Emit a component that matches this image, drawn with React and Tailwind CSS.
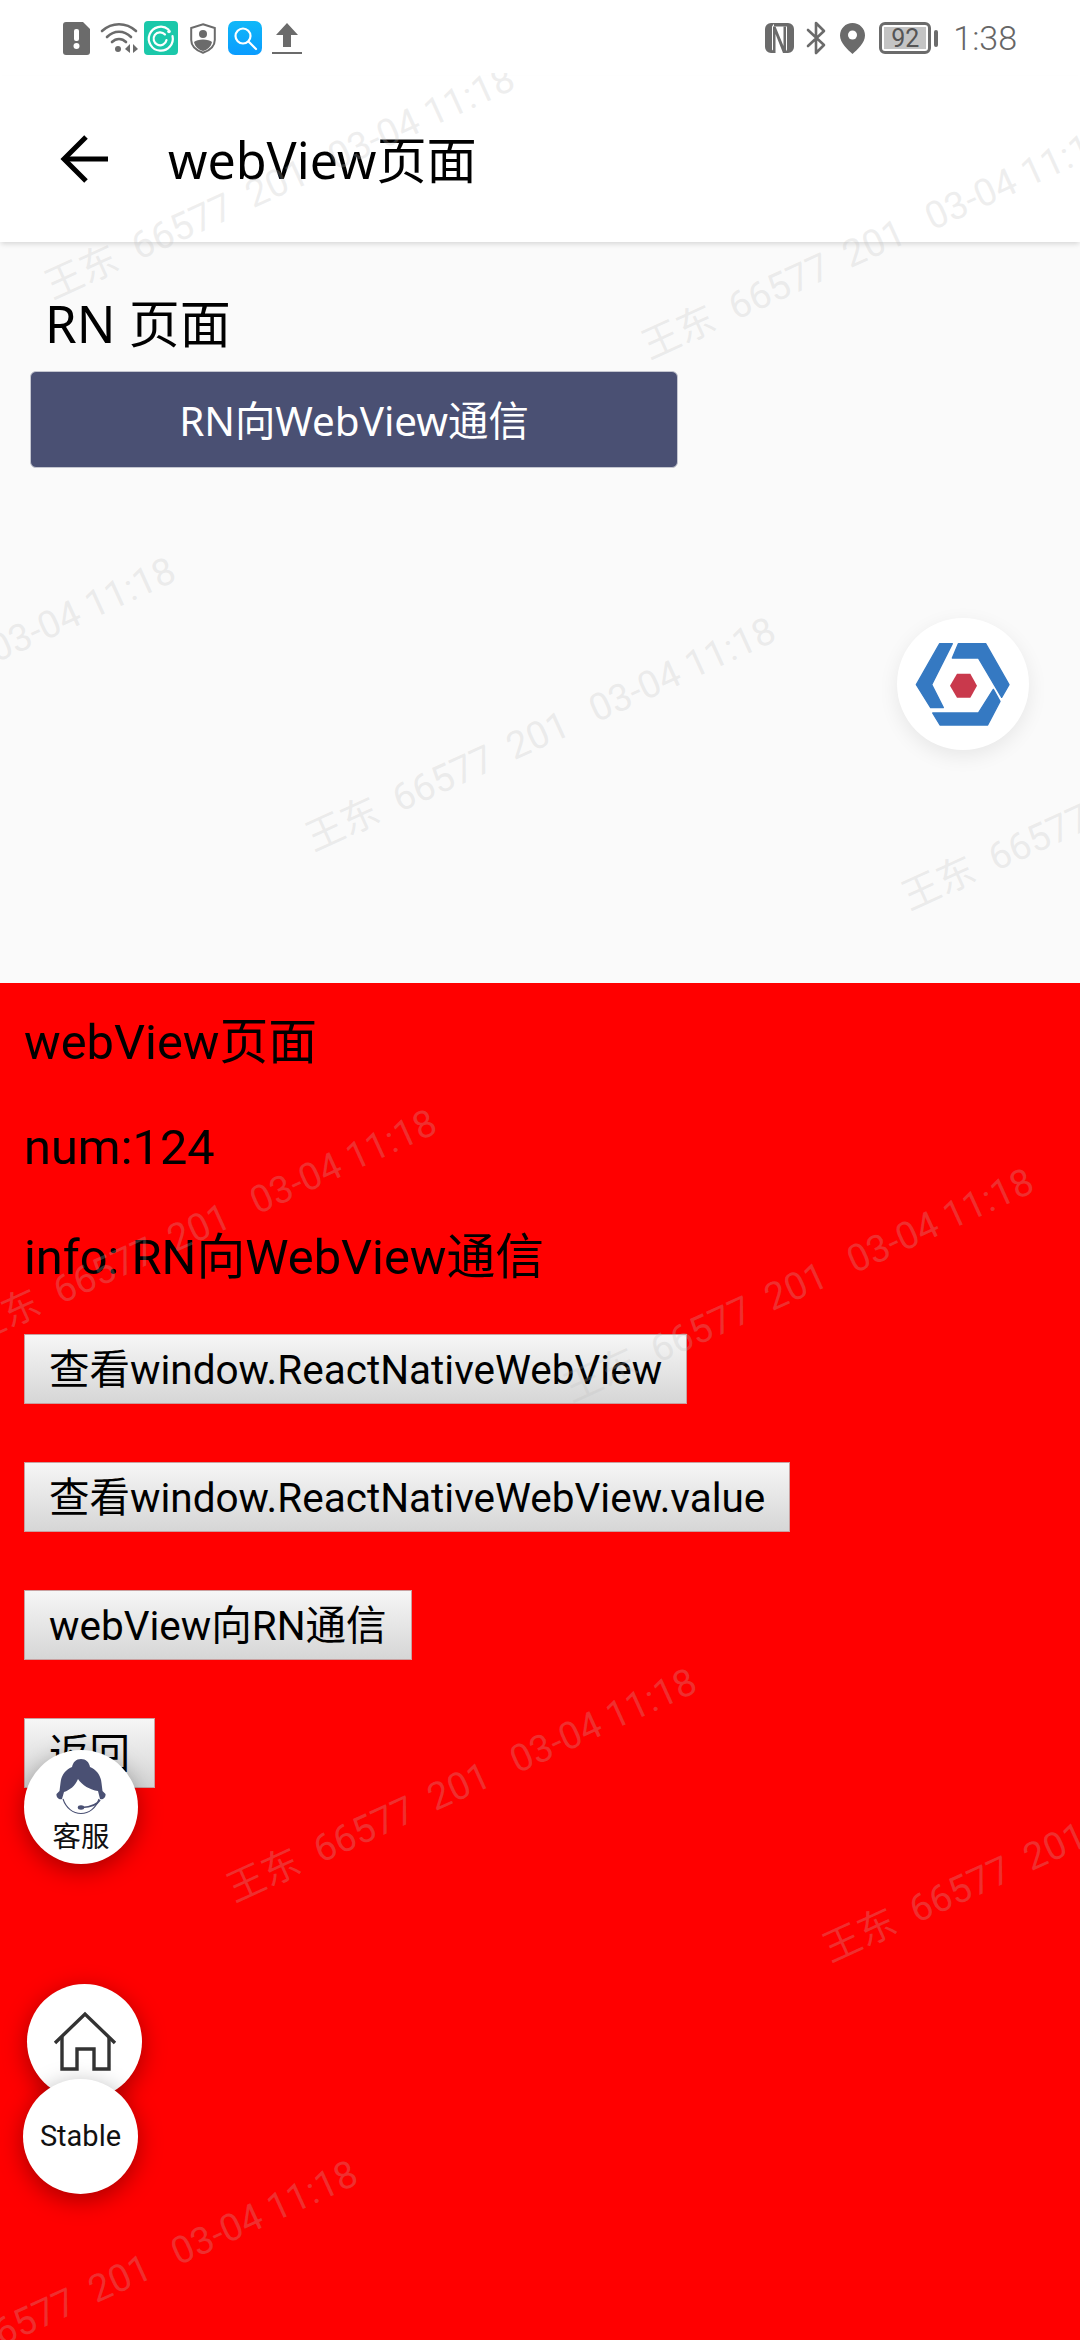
const marks = [
  "left-[47px] top-[191px]",
  "left-[644px] top-[251px]",
  "left-[-292px] top-[683px]",
  "left-[308px] top-[743px]",
  "left-[904px] top-[802px]",
  "left-[-31px] top-[1235px]",
  "left-[566px] top-[1294px]",
  "left-[229px] top-[1794px]",
  "left-[825px] top-[1854px]",
  "left-[-110px] top-[2286px]",
];

const webButtons = ["查看window.ReactNativeWebView", "查看window.ReactNativeWebView.value", "webView向RN通信", "返回"];

function DocIcon() {
  return (
    <svg width="27" height="33" viewBox="0 0 27 33">
      <path d="M3 0H20L27 7V30a3 3 0 0 1-3 3H3a3 3 0 0 1-3-3V3a3 3 0 0 1 3-3Z" fill="#6b6b6b" />
      <rect x="11" y="7" width="5" height="12" rx="2" fill="#fff" />
      <circle cx="13.5" cy="24" r="3" fill="#fff" />
    </svg>
  );
}

function WifiIcon() {
  return (
    <svg width="38" height="32" viewBox="0 0 38 32" fill="none" stroke="#6b6b6b" strokeWidth="2.6" strokeLinecap="round">
      <path d="M2 9C12 0 26 0 36 9" />
      <path d="M7 15C14 8 24 8 31 15" />
      <path d="M12 20C16 16 22 16 26 20" />
      <circle cx="18" cy="27" r="3" fill="#6b6b6b" stroke="none" />
      <path d="M30 22L25 27L30 31Z" fill="#6b6b6b" stroke="none" />
      <path d="M33 22L38 27L33 31Z" fill="#6b6b6b" stroke="none" />
    </svg>
  );
}

function TealIcon() {
  return (
    <svg width="34" height="34" viewBox="0 0 34 34" fill="none">
      <rect width="34" height="34" rx="4" fill="#1bc8aa" />
      <path d="M24.5 8.5A12 12 0 1 0 28.5 15" stroke="#fff" strokeWidth="2.2" strokeLinecap="round" />
      <path d="M21 13.5A6.5 6.5 0 1 0 22.5 19" stroke="#fff" strokeWidth="2.2" strokeLinecap="round" />
      <circle cx="25" cy="10.5" r="1.8" fill="#fff" />
    </svg>
  );
}

function ShieldIcon() {
  return (
    <svg width="26" height="31" viewBox="0 0 26 31" fill="none">
      <path d="M13 1.2L24.8 5V17C24.8 23 19.5 27.5 13 29.8C6.5 27.5 1.2 23 1.2 17V5Z" stroke="#6b6b6b" strokeWidth="2" />
      <circle cx="13" cy="11" r="4" fill="#6b6b6b" />
      <path d="M4 19C7 15.5 19 15.5 22 19C21 24 17 27 13 28C9 27 5 24 4 19Z" fill="#6b6b6b" />
    </svg>
  );
}

function SearchIcon() {
  return (
    <svg width="34" height="34" viewBox="0 0 34 34" fill="none">
      <defs>
        <linearGradient id="sb" x1="0" y1="0" x2="0" y2="1">
          <stop offset="0" stopColor="#10b8f8" />
          <stop offset="1" stopColor="#0a9cff" />
        </linearGradient>
      </defs>
      <rect width="34" height="34" rx="7" fill="url(#sb)" />
      <circle cx="15" cy="15" r="7.5" stroke="#fff" strokeWidth="2.2" />
      <path d="M21 21L28 28" stroke="#fff" strokeWidth="2.2" strokeLinecap="round" />
    </svg>
  );
}

function UploadIcon() {
  return (
    <svg width="30" height="31" viewBox="0 0 30 31">
      <path d="M15 0L26 12H19V24H11V12H4Z" fill="#6b6b6b" />
      <rect x="0" y="29" width="30" height="2" fill="#6b6b6b" />
    </svg>
  );
}

function NfcIcon() {
  return (
    <svg width="29" height="30" viewBox="0 0 29 30">
      <path d="M6 0H9.5L7 3.5V26.5L10 30H6a6 6 0 0 1-6-6V6a6 6 0 0 1 6-6Z" fill="#6b6b6b" />
      <path d="M9 0H23a6 6 0 0 1 6 6V24a6 6 0 0 1-6 6H20L22 26.5V3.5H9Z" fill="#6b6b6b" />
      <path d="M8 3.5V30H10.5V11L18 30H21V3.5H18.5V23L10.5 3.5Z" fill="#6b6b6b" />
    </svg>
  );
}

function BluetoothIcon() {
  return (
    <svg width="21" height="34" viewBox="0 0 21 34" fill="none" stroke="#6b6b6b" strokeWidth="2.6" strokeLinejoin="round" strokeLinecap="round">
      <path d="M2 9L18 24L10 32V2L18 10L2 25" />
    </svg>
  );
}

function PinIcon() {
  return (
    <svg width="25" height="31" viewBox="0 0 25 31">
      <path d="M12.5 0C19.5 0 25 5.5 25 12.5C25 20 17 27 12.5 31C8 27 0 20 0 12.5C0 5.5 5.5 0 12.5 0Z" fill="#6b6b6b" />
      <circle cx="12.5" cy="12" r="4.5" fill="#fff" />
    </svg>
  );
}

function BrandLogo() {
  return (
    <svg width="132" height="132" viewBox="112 85 396 396">
      <g fill="#3579c2" stroke="#3579c2" strokeWidth="4" strokeLinejoin="round">
        <path d="M240 162H278L216 285L251 354H213L170 285Z" />
        <path d="M296 162H378L448 285L426 323L356 205H278Z" />
        <path d="M219 370H356L401 299L421 335L384 406H241Z" />
      </g>
      <path d="M292 252H332L352 288L332 324H292L271 288Z" fill="#c9394c" />
    </svg>
  );
}

function AgentIcon() {
  return (
    <svg width="50" height="56" viewBox="0 0 50 56" fill="none">
      <path d="M25 0C20 0 17 3 16 8C9 11 5 17 4.5 24L3.5 32L0.5 35C0 38 3 41 6 40L8 33C14 31 19 27 22 20C26 26 34 31 42 32L44 40C47 41 50 38 49.5 35L46.5 32L45.5 24C45 17 41 11 34 8C33 3 30 0 25 0Z" fill="#4a5073" />
      <path d="M7 40C10 49 17 54.5 25 54.5C33 54.5 40 49 43 40" stroke="#4a5073" strokeWidth="1.1" />
      <path d="M44 41C41 46 35 48 26 48.5" stroke="#4a5073" strokeWidth="1.6" />
      <ellipse cx="25" cy="48.5" rx="3.2" ry="2.2" fill="#4a5073" />
    </svg>
  );
}

function HomeIcon() {
  return (
    <svg width="64" height="62" viewBox="0 0 64 62" fill="none" stroke="#333" strokeWidth="3.4">
      <path d="M2 32L32 3L62 32" strokeLinejoin="miter" />
      <path d="M9 26V58H24V38H41V58H56V26" />
    </svg>
  );
}

function WatermarkLayer() {
  return (
    <div className="absolute left-0 right-0 top-[73px] bottom-0 overflow-hidden pointer-events-none z-20">
      {marks.map((m, i) => (
        <div
          key={i}
          className={`absolute ${m} h-[48px] leading-[48px] text-[38px] whitespace-pre origin-left rotate-[-24.5deg] text-[rgba(190,190,190,0.25)]`}
        >
          {"王东  66577  201  \u200903-04 11:18"}
        </div>
      ))}
    </div>
  );
}

export default function App() {
  return (
    <div className="relative w-[1080px] h-[2340px] overflow-hidden flex flex-col bg-[#fafafa] text-black font-[Roboto,'Noto_Sans_CJK_SC',sans-serif]">
      <div className="h-[76px] bg-white flex items-center justify-between pl-[63px] pr-[63px] shrink-0">
        <div className="flex items-center">
          <DocIcon />
          <div className="ml-[10px]"><WifiIcon /></div>
          <div className="ml-[6px]"><TealIcon /></div>
          <div className="ml-[12px]"><ShieldIcon /></div>
          <div className="ml-[12px]"><SearchIcon /></div>
          <div className="ml-[10px]"><UploadIcon /></div>
        </div>
        <div className="flex items-center text-[#666]">
          <NfcIcon />
          <div className="ml-[12px]"><BluetoothIcon /></div>
          <div className="ml-[13px]"><PinIcon /></div>
          <div className="ml-[14px] w-[52px] h-[32px] border-[3px] border-[#6b6b6b] rounded-[6px] p-[2px]">
            <div className="h-full bg-[#c4c4c4] flex items-center justify-center text-[25px] leading-none text-[#555]">92</div>
          </div>
          <div className="ml-[3px] w-[4px] h-[17px] rounded-[2px] bg-[#6b6b6b]" />
          <div className="ml-[15px] text-[34px] leading-none font-light">1:38</div>
        </div>
      </div>

      <div className="h-[166px] shrink-0 bg-white flex items-center pl-[60px] shadow-[0_3px_5px_-1px_rgba(0,0,0,0.14)] z-10">
        <svg width="48" height="48" viewBox="0 0 48 48" fill="none" stroke="#000" strokeWidth="5">
          <path d="M48 24H4" />
          <path d="M26 2L4 24L26 46" />
        </svg>
        <div className="ml-[60px] text-[50.2px] leading-[62px] pt-[1px] font-['Noto_Sans','Noto_Sans_CJK_SC',sans-serif]">webView页面</div>
      </div>

      <div className="h-[741px] shrink-0 px-[30px] pt-[49px] flex flex-col items-start font-['Noto_Sans','Noto_Sans_CJK_SC',sans-serif]">
        <div className="ml-[15px] text-[51px] leading-[64px]">RN 页面</div>
        <button className="mt-[16px] w-[648px] h-[97px] pt-[3px] rounded-[6px] bg-[#4a5073] border border-[#c4c6d0] text-white text-[40.4px] flex items-center justify-center">
          RN向WebView通信
        </button>
      </div>

      <div className="flex-1 bg-[#ff0000] pt-[29px] pl-[24px] flex flex-col items-start">
        <p className="text-[48.8px] leading-[61px] mb-[44px]">webView页面</p>
        <p className="text-[48.8px] leading-[61px] mb-[49px]">num:124</p>
        <p className="text-[48.8px] leading-[61px]">info: RN向WebView通信</p>
        <div className="mt-[46px] flex flex-col items-start gap-[58px]">
          {webButtons.map((t) => (
            <button
              key={t}
              className="h-[70px] px-[24px] pt-[3px] text-[40.5px] leading-none whitespace-nowrap text-black border border-[#c9a0a0] bg-gradient-to-b from-[#f6f6f6] to-[#d6d6d6]"
            >
              {t}
            </button>
          ))}
        </div>
      </div>

      <div className="absolute left-[897px] top-[618px] w-[132px] h-[132px] rounded-full bg-white shadow-[0_6px_20px_rgba(0,0,0,0.08)]">
        <BrandLogo />
      </div>

      <div className="absolute left-[24px] top-[1750px] w-[114px] h-[114px] rounded-full bg-white shadow-[0_6px_24px_rgba(0,0,0,0.35)] flex flex-col items-center pt-[9px]">
        <AgentIcon />
        <div className="text-[28.5px] leading-[32px] mt-[7px] text-[#111]">客服</div>
      </div>

      <div className="absolute left-[27px] top-[1984px] w-[115px] h-[115px] rounded-full bg-white shadow-[0_6px_24px_rgba(0,0,0,0.35)] flex items-center justify-center">
        <HomeIcon />
      </div>

      <div className="absolute left-[23px] top-[2079px] w-[115px] h-[115px] rounded-full bg-white shadow-[0_6px_24px_rgba(0,0,0,0.35)] flex items-center justify-center text-[29px] text-[#111]">
        Stable
      </div>

      <WatermarkLayer />
    </div>
  );
}
